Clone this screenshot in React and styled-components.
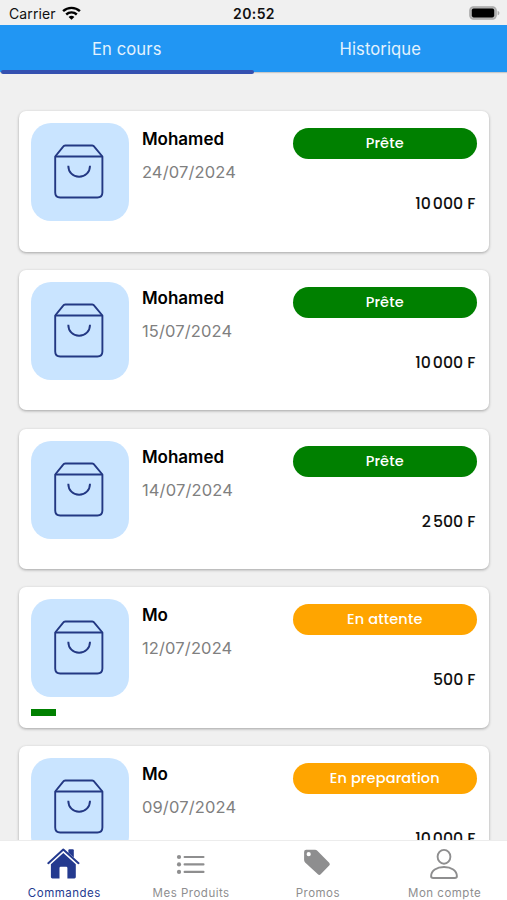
import React from 'react';
import styled, { createGlobalStyle } from 'styled-components';

const GlobalStyle = createGlobalStyle`
  *, *::before, *::after { box-sizing: border-box; }
  body { margin: 0; background: #f0f0f0; font-family: Inter, sans-serif; overflow: hidden; }
`;

const Screen = styled.div`
  width: 507px;
  height: 900px;
  display: flex;
  flex-direction: column;
  background: #f0f0f0;
  overflow: hidden;
`;

const StatusBar = styled.header`
  height: 25px;
  flex: none;
  display: grid;
  grid-template-columns: 1fr auto 1fr;
  align-items: center;
  padding: 2px 7px 0 8px;
  color: #111;
  font-size: 14px;
`;

const Carrier = styled.div`
  display: flex;
  align-items: center;
  gap: 6px;
  padding-left: 1px;
  letter-spacing: 0.1px;
`;

const Clock = styled.time`
  font-weight: 600;
  font-size: 14px;
  letter-spacing: 0.4px;
`;

const BatterySlot = styled.div`
  display: flex;
  justify-content: flex-end;
  padding-bottom: 1px;
`;

const Tabs = styled.nav`
  height: 47px;
  flex: none;
  display: grid;
  grid-template-columns: 1fr 1fr;
  background: #2196f3;
  box-shadow: 0 1px 1px rgba(0, 0, 0, 0.16);
`;

const Tab = styled.div`
  position: relative;
  display: flex;
  align-items: center;
  justify-content: center;
  color: #e3f2fd;
  font-size: 16.6px;
  letter-spacing: 0.1px;

  &::after {
    content: '';
    display: ${(p) => (p.$active ? 'block' : 'none')};
    position: absolute;
    left: 1px;
    right: 0;
    bottom: -2px;
    height: 4px;
    border-radius: 2px;
    background: #3450b0;
  }
`;

const Orders = styled.main`
  flex: 1;
  min-height: 0;
  overflow: hidden;
  display: flex;
  flex-direction: column;
  gap: 18.3px;
  padding: 39px 18px 0 19px;
`;

const Card = styled.article`
  height: 140.5px;
  flex: none;
  display: grid;
  grid-template-columns: 98px 1fr 183.5px;
  grid-template-rows: 98px auto;
  column-gap: 12.5px;
  row-gap: 12px;
  padding: 12px 12.5px 12px 12.4px;
  border-radius: 7px;
  background: #fff;
  box-shadow: 0 1px 3px rgba(0, 0, 0, 0.32);
`;

const Thumb = styled.div`
  height: 98px;
  display: flex;
  align-items: center;
  justify-content: center;
  padding: 0 2px 1px 0;
  border-radius: 20px;
  background: #c9e4ff;
`;

const Details = styled.div`
  padding-top: 4px;
`;

const Customer = styled.h2`
  margin: 0;
  font-size: 17px;
  line-height: 24px;
  font-weight: 600;
  color: #000;
`;

const OrderDate = styled.p`
  margin: 9px 0 0;
  font-size: 16.5px;
  line-height: 24px;
  letter-spacing: 0.15px;
  color: #808080;
`;

const Summary = styled.div`
  display: flex;
  flex-direction: column;
  align-items: stretch;
  padding-top: 5px;
`;

const Badge = styled.div`
  height: 31px;
  display: flex;
  align-items: center;
  justify-content: center;
  border-radius: 16px;
  background: ${(p) => p.$color};
  color: #fff;
  font-family: Poppins, Inter, sans-serif;
  font-weight: 500;
  font-size: 14.5px;
  letter-spacing: 0.15px;
`;

const Price = styled.div`
  margin-top: 33px;
  padding-right: 1px;
  text-align: right;
  font-family: Poppins, Inter, sans-serif;
  font-weight: 500;
  font-size: 15.8px;
  line-height: 24px;
  color: #111;
`;

const Progress = styled.div`
  width: 24.5px;
  height: 7px;
  background: #008000;
`;

const BottomNav = styled.nav`
  height: 60px;
  flex: none;
  display: grid;
  grid-template-columns: repeat(4, 1fr);
  border-top: 1px solid #ececec;
  background: #fff;
`;

const NavItem = styled.div`
  display: flex;
  flex-direction: column;
  align-items: center;
  padding-left: 1px;
  color: ${(p) => (p.$active ? '#243a8f' : '#8e8e8f')};
`;

const NavIcon = styled.span`
  height: 42.5px;
  padding-top: 6px;
  display: flex;
  justify-content: center;
  align-items: flex-start;
`;

const NavLabel = styled.span`
  padding-left: 1px;
  font-size: 11.5px;
  line-height: 18px;
  letter-spacing: 0.5px;
  white-space: nowrap;
`;

const WifiIcon = () => (
  <svg width="19" height="15" viewBox="0 0 19 15" fill="none" stroke="#000" strokeWidth="2.4">
    <path d="M1.1 5.2C5.8.7 13.2.7 17.9 5.2" />
    <path d="M4.2 8.5c3-2.8 7.6-2.8 10.6 0" />
    <path d="M9.5 13.8 6.6 10.9c1.7-1.5 4.1-1.5 5.8 0Z" fill="#000" stroke="none" />
  </svg>
);

const BatteryIcon = () => (
  <svg width="31" height="14" viewBox="0 0 31 14">
    <rect x="0.8" y="0.8" width="26.4" height="12.4" rx="3.6" fill="#b4b4b4" stroke="#aaa" strokeWidth="1.2" />
    <rect x="2.8" y="2.6" width="22.4" height="8.8" rx="1.8" fill="#000" />
    <path d="M28.6 4.7c2.4.8 2.4 3.8 0 4.6Z" fill="#aaa" />
  </svg>
);

const BagIcon = () => (
  <svg width="50" height="55" viewBox="0 0 50 55" fill="none" stroke="#233883" strokeWidth="1.9" strokeLinejoin="round">
    <path d="M1.2 12.5 9 2.8Q9.8 1.5 11.3 1.5H38.2Q39.6 1.5 40.4 2.8L48.4 12.5V48.5Q48.4 53.5 43.4 53.5H6.2Q1.2 53.5 1.2 48.5Z" />
    <path d="M1.2 12.5H48.4" />
    <path d="M14.3 21.7c0 6.5 4.6 11.1 10.8 11.1S36 28.2 36 21.7" />
  </svg>
);

const HomeIcon = () => (
  <svg width="33" height="32" viewBox="0 0 33 32" fill="currentColor">
    <path d="m1.3 16.2 15-13.6 15.2 13.6" fill="none" stroke="currentColor" strokeWidth="2" strokeLinecap="round" strokeLinejoin="round" />
    <path d="M21.4 3.3q0-1 1-1h3.4q1 0 1 1v7.3l-5.4-4.8Z" />
    <path d="M3.9 17.3 16.3 6 28.8 17.3V30q0 1.4-1.4 1.4h-7V21q0-1.2-1.2-1.2h-5.5q-1.2 0-1.2 1.2v10.4H5.4Q3.9 31.4 3.9 30Z" />
  </svg>
);

const ListIcon = () => (
  <svg width="30" height="32" viewBox="0 0 30 32" fill="currentColor">
    <circle cx="3" cy="10" r="2.1" />
    <circle cx="3" cy="17.4" r="2.1" />
    <circle cx="3" cy="24.9" r="2.1" />
    <path d="M8.6 10h18.9M8.6 17.4h18.9M8.6 24.9h18.9" stroke="currentColor" strokeWidth="2.1" strokeLinecap="round" />
  </svg>
);

const TagIcon = () => (
  <svg width="28" height="32" viewBox="0 0 28 32" fill="currentColor" fillRule="evenodd">
    <path d="M3.2 2.8H12q1.4 0 2.3.9l11.9 12q1.4 1.5 0 2.9l-8.5 8.6q-1.4 1.4-2.8 0L2.1 15.4q-1-1-1-2.4V5q0-2.2 2.1-2.2ZM5.7 5.1a2.1 2.1 0 1 0 0 4.2 2.1 2.1 0 0 0 0-4.2Z" />
  </svg>
);

const UserIcon = () => (
  <svg width="30" height="32" viewBox="0 0 30 32" fill="none" stroke="currentColor" strokeWidth="1.9">
    <ellipse cx="15" cy="9.8" rx="6.4" ry="6.9" />
    <path d="M2.1 30.2C2.1 24.4 7.6 20.9 15 20.9s12.9 3.5 12.9 9.3q0 1.7-2.2 1.7H4.3q-2.2 0-2.2-1.7Z" transform="translate(0 -.9)" />
  </svg>
);

const orders = [
  { name: 'Mohamed', date: '24/07/2024', status: 'Prête', color: '#008000', price: '10\u202f000 F' },
  { name: 'Mohamed', date: '15/07/2024', status: 'Prête', color: '#008000', price: '10\u202f000 F' },
  { name: 'Mohamed', date: '14/07/2024', status: 'Prête', color: '#008000', price: '2\u202f500 F' },
  { name: 'Mo', date: '12/07/2024', status: 'En attente', color: '#ffa500', price: '500 F', progress: true },
  { name: 'Mo', date: '09/07/2024', status: 'En preparation', color: '#ffa500', price: '10\u202f000 F' },
];

const navItems = [
  { label: 'Commandes', Icon: HomeIcon, active: true },
  { label: 'Mes Produits', Icon: ListIcon },
  { label: 'Promos', Icon: TagIcon },
  { label: 'Mon compte', Icon: UserIcon },
];

export default function App() {
  return (
    <Screen>
      <GlobalStyle />
      <StatusBar>
        <Carrier>Carrier <WifiIcon /></Carrier>
        <Clock>20:52</Clock>
        <BatterySlot><BatteryIcon /></BatterySlot>
      </StatusBar>
      <Tabs>
        <Tab $active>En cours</Tab>
        <Tab>Historique</Tab>
      </Tabs>
      <Orders>
        {orders.map((o) => (
          <Card key={o.date}>
            <Thumb><BagIcon /></Thumb>
            <Details>
              <Customer>{o.name}</Customer>
              <OrderDate>{o.date}</OrderDate>
            </Details>
            <Summary>
              <Badge $color={o.color}>{o.status}</Badge>
              <Price>{o.price}</Price>
            </Summary>
            {o.progress && <Progress />}
          </Card>
        ))}
      </Orders>
      <BottomNav>
        {navItems.map(({ label, Icon, active }) => (
          <NavItem key={label} $active={active}>
            <NavIcon><Icon /></NavIcon>
            <NavLabel>{label}</NavLabel>
          </NavItem>
        ))}
      </BottomNav>
    </Screen>
  );
}
